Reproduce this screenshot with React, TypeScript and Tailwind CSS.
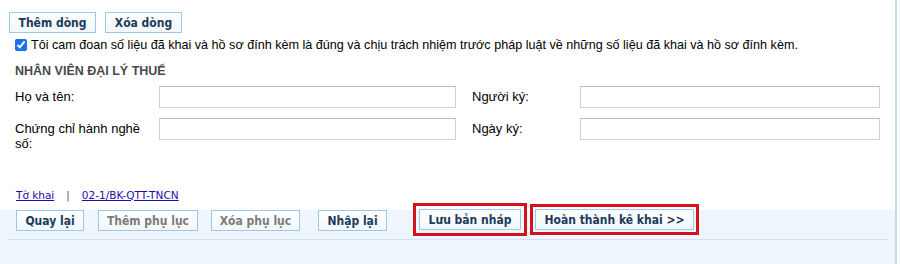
import React from "react";

const btnFont = { fontFamily: '"DejaVu Sans Condensed", "DejaVu Sans", sans-serif' };
const linkFont = { fontFamily: '"DejaVu Sans", sans-serif' };

function Btn({ children, disabled, className = "" }: { children: React.ReactNode; disabled?: boolean; className?: string }) {
  return (
    <button
      className={`h-[21px] border border-[#9ec8e8] bg-gradient-to-b from-white to-[#f1f7fd] text-[12px] font-bold leading-none flex items-center justify-center ${disabled ? "text-[#7b7b7b]" : "text-[#1c3a5a]"} ${className}`}
      style={btnFont}
    >
      {children}
    </button>
  );
}

function Field({ className = "" }: { className?: string }) {
  return <div className={`h-[22px] border border-[#cfcfcf] border-t-[#bdbdbd] bg-white ${className}`} />;
}

export default function App() {
  return (
    <div className="w-[900px] h-[264px] bg-white flex overflow-hidden" style={{ fontFamily: '"Liberation Sans", Arial, sans-serif' }}>
      <div className="w-[897px] border-r-2 border-[#c3dbf0] flex flex-col">
        <div className="h-[210px] flex flex-col pl-[9px]">
          <div className="flex gap-[9px] mt-[12px]">
            <Btn className="w-[87px]">Thêm dòng</Btn>
            <Btn className="w-[77px]">Xóa dòng</Btn>
          </div>
          <label className="flex items-center mt-[6px] pl-[6px] text-[12.6px] text-black leading-none">
            <input type="checkbox" defaultChecked className="w-[12px] h-[12px] m-0 mr-[4px] accent-[#1a73e8]" />
            Tôi cam đoan số liệu đã khai và hồ sơ đính kèm là đúng và chịu trách nhiệm trước pháp luật về những số liệu đã khai và hồ sơ đính kèm.
          </label>
          <div className="mt-[13px] pl-[6px] text-[12.5px] font-bold text-[#4a4a4a] leading-none">NHÂN VIÊN ĐẠI LÝ THUẾ</div>
          <div className="mt-[9px] pl-[6px] flex items-center text-[13px] text-black">
            <div className="w-[144px]">Họ và tên:</div>
            <Field className="w-[297px]" />
            <div className="w-[124px] pl-[16px]">Người ký:</div>
            <Field className="w-[300px]" />
          </div>
          <div className="mt-[10px] pl-[6px] flex items-start text-[13px] text-black">
            <div className="w-[144px] leading-[15px] pt-[3px]">Chứng chỉ hành nghề<br />số:</div>
            <Field className="w-[297px]" />
            <div className="w-[124px] pl-[16px] leading-[22px]">Ngày ký:</div>
            <Field className="w-[300px]" />
          </div>
          <div className="mt-auto mb-[10px] pl-[7px] flex items-center text-[10.5px] leading-none" style={linkFont}>
            <a href="#" className="text-[#1a0dab] underline">Tờ khai</a>
            <span className="mx-[12px] text-[#555]">|</span>
            <a href="#" className="text-[#1a0dab] underline">02-1/BK-QTT-TNCN</a>
          </div>
        </div>
        <div className="flex-1 bg-[#eff6fd] flex flex-col">
          <div className="h-[29px] flex items-start pl-[16px]">
            <Btn className="w-[68px]">Quay lại</Btn>
            <Btn disabled className="w-[100px] ml-[14px]">Thêm phụ lục</Btn>
            <Btn disabled className="w-[89px] ml-[13px]">Xóa phụ lục</Btn>
            <Btn className="w-[69px] ml-[18px]">Nhập lại</Btn>
            <div className="ml-[26px] -mt-[7px] border-[3px] border-[#d4111c] p-[3px] flex">
              <Btn className="w-[102px]">Lưu bản nháp</Btn>
            </div>
            <div className="ml-[3px] -mt-[6px] border-[3px] border-[#d4111c] p-[2px] flex">
              <Btn className="w-[159px]">Hoàn thành kê khai &gt;&gt;</Btn>
            </div>
          </div>
          <div className="ml-[8px] w-[880px] h-px bg-[#cde2f4]" />
        </div>
      </div>
    </div>
  );
}
